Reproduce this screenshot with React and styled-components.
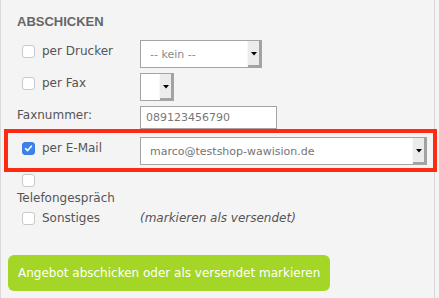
import React from "react";
import styled, { createGlobalStyle } from "styled-components";

const Global = createGlobalStyle`
  html, body { margin: 0; padding: 0; background: #f4f4f4; }
  body { font-family: "DejaVu Sans", Verdana, sans-serif; overflow: hidden; }
`;

const Panel = styled.div`
  box-sizing: border-box;
  width: 435px;
  height: 298px;
  border-left: 1px solid #d8d8d8;
  border-right: 1px solid #d8d8d8;
  background: #f4f4f4;
  padding: 14px 0 0 16px;
  display: flex;
  flex-direction: column;
  align-items: flex-start;
`;

const Heading = styled.h3`
  margin: 0 0 11px 0;
  font-family: "Liberation Sans", Arial, sans-serif;
  font-weight: bold;
  font-size: 13px;
  line-height: 15px;
  color: #666;
`;

const Row = styled.div`
  display: grid;
  grid-template-columns: 123px auto;
  align-items: start;
  margin-top: ${(p) => p.$gap || 0}px;
`;

const HighlightRow = styled(Row)`
  box-sizing: border-box;
  width: 433px;
  margin-left: -13px;
  border: 4px solid #ff2a12;
  padding: 4px 0 3px 9px;
`;

const LabelCell = styled.label`
  display: flex;
  flex-wrap: wrap;
  align-items: center;
  padding-top: ${(p) => p.$pad || 0}px;
  font-size: 12px;
  line-height: 14px;
  color: #555;
`;

const StackCell = styled.label`
  display: flex;
  flex-direction: column;
  align-items: flex-start;
  font-size: 12px;
  line-height: 14px;
  color: #555;
`;

const Box = styled.span`
  box-sizing: border-box;
  width: 13px;
  height: 13px;
  margin: 0 7px 0 5px;
  border-radius: 3px;
  border: 1px solid ${(p) => (p.$checked ? "#3b7fe6" : "#c9c9c9")};
  background: ${(p) => (p.$checked ? "#3d82ec" : "#fff")};
  display: inline-flex;
  align-items: center;
  justify-content: center;
  flex: none;
`;

const StackBox = styled(Box)`
  margin-bottom: 4px;
`;

const Checkbox = ({ checked, as: Comp = Box }) => (
  <Comp $checked={checked}>
    {checked && (
      <svg width="9" height="9" viewBox="0 0 9 9">
        <path d="M1.6 4.7 L3.6 6.6 L7.4 2.2" fill="none" stroke="#fff" strokeWidth="1.6" strokeLinecap="round" strokeLinejoin="round" />
      </svg>
    )}
  </Comp>
);

const SelectBox = styled.div`
  box-sizing: border-box;
  width: ${(p) => p.$w}px;
  height: 28px;
  border: 1px solid #a4a4a4;
  background: #fff;
  display: flex;
  align-items: stretch;
`;

const SelectValue = styled.span`
  flex: 1;
  display: flex;
  align-items: center;
  padding-left: 9px;
  font-size: 11px;
  line-height: 13px;
  color: ${(p) => (p.$muted ? "#8a8a8a" : "#747474")};
  white-space: nowrap;
  overflow: hidden;
`;

const ArrowButton = styled.span`
  box-sizing: border-box;
  width: 14px;
  background: #ececec;
  border-left: 1px solid #f8f8f8;
  box-shadow: inset -2px -2px 0 #a2a2a2;
  display: flex;
  align-items: center;
  justify-content: center;
  padding: 0 2px 1px 0;
`;

const Select = ({ width, value, muted }) => (
  <SelectBox $w={width}>
    <SelectValue $muted={muted}>{value}</SelectValue>
    <ArrowButton>
      <svg width="6" height="4" viewBox="0 0 6 4">
        <path d="M0 0 H6 L3 3.5 Z" fill="#000" />
      </svg>
    </ArrowButton>
  </SelectBox>
);

const TextInput = styled.div`
  box-sizing: border-box;
  width: 137px;
  height: 23px;
  border: 1px solid #a4a4a4;
  background: #fff;
  padding-left: 5px;
  display: flex;
  align-items: center;
  font-size: 11px;
  line-height: 13px;
  color: #777;
`;

const Note = styled.span`
  font-size: 12px;
  line-height: 14px;
  font-style: italic;
  color: #555;
`;

const SubmitButton = styled.button`
  margin: 30px 0 0 -9px;
  width: 322px;
  height: 36px;
  border: none;
  border-radius: 6px;
  background: #a4d627;
  color: #fff;
  font-family: "DejaVu Sans", Verdana, sans-serif;
  font-size: 12px;
  line-height: 36px;
  text-align: left;
  padding: 0 0 0 10px;
  white-space: nowrap;
`;

export default function App() {
  return (
    <>
      <Global />
      <Panel>
        <Heading>ABSCHICKEN</Heading>
        <Row>
          <LabelCell $pad={4}>
            <Checkbox />per Drucker
          </LabelCell>
          <Select width={122} value="-- kein --" muted />
        </Row>
        <Row $gap={5}>
          <LabelCell $pad={3}>
            <Checkbox />per Fax
          </LabelCell>
          <Select width={34} value="" />
        </Row>
        <Row $gap={5}>
          <LabelCell $pad={2}>Faxnummer:</LabelCell>
          <TextInput>089123456790</TextInput>
        </Row>
        <HighlightRow>
          <LabelCell $pad={4}>
            <Checkbox checked />per E-Mail
          </LabelCell>
          <Select width={287} value="marco@testshop-wawision.de" />
        </HighlightRow>
        <Row $gap={2}>
          <StackCell>
            <Checkbox as={StackBox} />
            Telefongespräch
          </StackCell>
        </Row>
        <Row $gap={6}>
          <LabelCell>
            <Checkbox />Sonstiges
          </LabelCell>
          <Note>(markieren als versendet)</Note>
        </Row>
        <SubmitButton>Angebot abschicken oder als versendet markieren</SubmitButton>
      </Panel>
    </>
  );
}
